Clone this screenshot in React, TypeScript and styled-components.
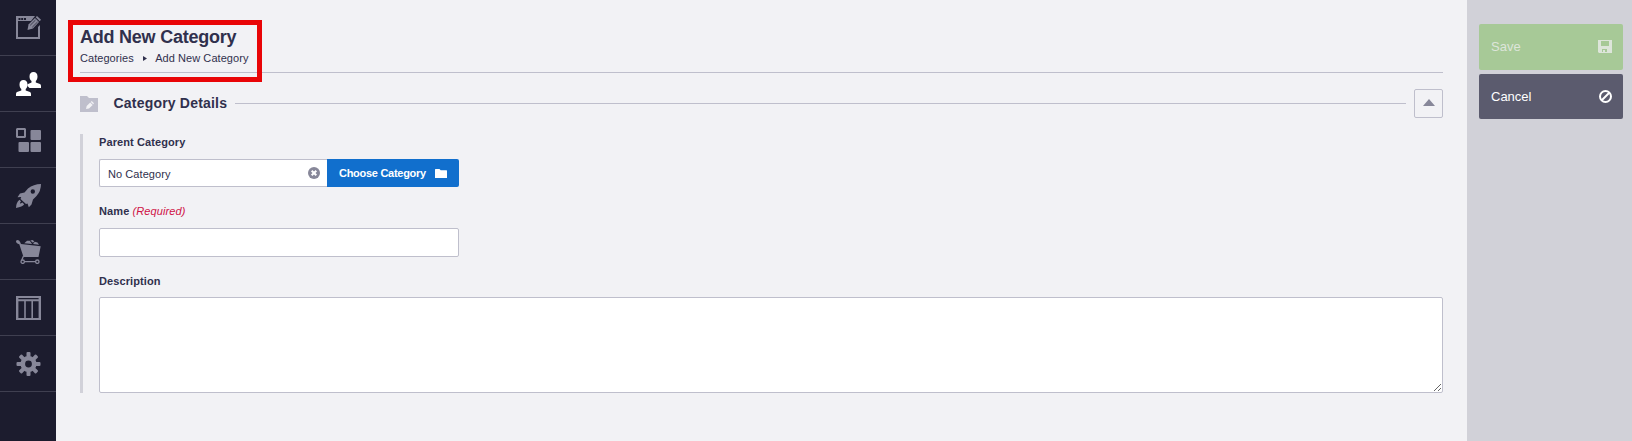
import React from 'react';
import styled, { createGlobalStyle } from 'styled-components';

const GlobalStyle = createGlobalStyle`
  * { box-sizing: border-box; }
  body { margin: 0; background: #f2f2f5; color: #30304d; font-family: "Liberation Sans", Arial, sans-serif; font-size: 11px; }
  svg { display: block; flex: none; }
  button, input, textarea { font-family: inherit; }
`;

const Page = styled.div`
  display: flex;
  height: 441px;
  overflow: hidden;
`;

const SideNav = styled.nav`
  width: 56px;
  flex: none;
  background: #1c1c2e;
`;

const NavItem = styled.a<{ $active?: boolean }>`
  display: flex;
  height: 56px;
  padding: 16px 0 0 16px;
  border-bottom: 1px solid #3f3f50;
  color: ${(p) => (p.$active ? '#ffffff' : '#878799')};
`;

const Main = styled.main`
  flex: 1;
  min-width: 0;
  padding: 27px 24px 0;
`;

const Header = styled.header`
  position: relative;
  height: 46px;
  border-bottom: 1px solid #bfbfcc;
`;

const Highlight = styled.div`
  position: absolute;
  left: -12px;
  top: -7px;
  width: 194px;
  height: 62px;
  border: 5px solid #e90507;
`;

const Title = styled.h1`
  margin: 0;
  font-size: 18px;
  line-height: 20px;
  letter-spacing: -0.23px;
`;

const Breadcrumb = styled.div`
  display: flex;
  align-items: center;
  margin-top: 4px;
  line-height: 14px;
`;

const Crumb = styled.span<{ $spacing: number }>`
  letter-spacing: ${(p) => p.$spacing}px;
`;

const CrumbArrow = styled.svg`
  margin: 0 8.5px 0 9px;
`;

const SectionBar = styled.div`
  display: flex;
  align-items: center;
  height: 29px;
  margin-top: 16px;
`;

const SectionTitle = styled.h2`
  margin: 0 0 1px 15.5px;
  width: 121.5px;
  font-size: 14px;
  line-height: 18px;
  letter-spacing: 0.2px;
  white-space: nowrap;
`;

const Rule = styled.div`
  flex: 1;
  height: 1px;
  margin-right: 8px;
  background: #bfbfcc;
`;

const Toggle = styled.button`
  display: flex;
  align-items: center;
  justify-content: center;
  width: 29px;
  height: 29px;
  padding: 0 0 2px;
  border: 1px solid #bfbfcc;
  border-radius: 2px;
  background: transparent;
  color: #878799;
`;

const Fields = styled.div`
  display: flex;
  flex-direction: column;
  height: 259px;
  margin-top: 16px;
  padding-left: 16px;
  border-left: 3px solid #d1d1d9;
`;

const Label = styled.label<{ $gap: number }>`
  display: block;
  margin-bottom: ${(p) => p.$gap}px;
  height: 16px;
  line-height: 16px;
  font-weight: bold;
  letter-spacing: 0.1px;
`;

const Required = styled.em`
  color: #cf1145;
  font-weight: normal;
  letter-spacing: 0.1px;
`;

const Picker = styled.div`
  display: flex;
  width: 360px;
  height: 28px;
  margin-bottom: 16px;
`;

const PickedValue = styled.div`
  display: flex;
  align-items: center;
  justify-content: space-between;
  flex: 1;
  padding: 0 7px 0 8px;
  border: 1px solid #bfbfcc;
  border-right: 0;
  border-radius: 2px 0 0 2px;
  background: #fff;
  line-height: 14px;
  letter-spacing: 0.07px;

  span { padding-top: 2px; }
`;

const ChooseButton = styled.button`
  display: flex;
  align-items: center;
  justify-content: space-between;
  width: 132px;
  padding: 0 12px;
  border: 0;
  border-radius: 0 2px 2px 0;
  background: #116fcd;
  color: #fff;
  font-size: 11px;
  font-weight: bold;
  letter-spacing: -0.28px;
  white-space: nowrap;
`;

const TextInput = styled.input`
  width: 360px;
  height: 29px;
  margin-bottom: 16px;
  border: 1px solid #bfbfcc;
  border-radius: 2px;
  background: #fff;
`;

const TextArea = styled.textarea`
  display: block;
  width: 100%;
  height: 96px;
  border: 1px solid #bfbfcc;
  border-radius: 2px;
  background: #fff;
  resize: both;
`;

const Actions = styled.aside`
  display: flex;
  flex-direction: column;
  gap: 4px;
  width: 165px;
  flex: none;
  padding: 24px 9px 0 12px;
  background: #d1d1d8;
`;

const ActionButton = styled.button<{ $kind: 'save' | 'cancel' }>`
  display: flex;
  align-items: center;
  justify-content: space-between;
  height: ${(p) => (p.$kind === 'save' ? 46 : 45)}px;
  padding: 0 11px 1px 12px;
  border: 0;
  border-radius: 2px;
  background: ${(p) => (p.$kind === 'save' ? '#a7c997' : '#5b5b6e')};
  color: ${(p) => (p.$kind === 'save' ? '#dde5da' : '#ffffff')};
  font-size: 13px;
`;

const ContentIcon = () => (
  <svg width="25" height="24" viewBox="0 0 25 24" fill="currentColor">
    <path d="M0 0H19L15 5H2V21H22V11L24 9V23H0ZM2.5 2V4H4.5V2ZM5.2 2V4H7.2V2ZM8 2V4H10V2Z" fillRule="evenodd" />
    <path d="M11.5 14L12.5 8.5L19 2L23 6L17 12.5Z" />
    <path d="M19.7 1.2L21 0L25 3.7L23.7 5.2Z" />
    <path d="M14.2 9.3L19.5 4M16.3 11.2L21.5 6" stroke="#1c1c2e" strokeWidth=".7" />
  </svg>
);

const UsersIcon = () => (
  <svg width="25" height="24" viewBox="0 0 25 24" fill="currentColor">
    <path d="M13.5 4.5C13.5 1.5 15 0 17.5 0S21.5 1.5 21.5 4.5C21.5 6.5 20.8 8 19.8 9V10.5L24 12Q25 12.6 25 14V16H13.5L11.5 14V12.2L15.5 10.5V9C14.3 8 13.5 6.5 13.5 4.5Z" />
    <path d="M3.5 12.5C3.5 9.5 5 8 7.5 8S11.5 9.5 11.5 12.5C11.5 14.5 10.8 16 9.7 17V18.5L14 20Q15 20.6 15 22V24H0V22Q0 20.6 1 20L5.3 18.5V17C4.2 16 3.5 14.5 3.5 12.5Z" />
  </svg>
);

const ModulesIcon = () => (
  <svg width="25" height="24" viewBox="0 0 25 24" fill="currentColor">
    <path d="M1 0H9L10 1V9L9 10H1L0 9V1ZM2 2V8H8V2Z" fillRule="evenodd" />
    <rect x="14.5" y="2" width="10.5" height="10" rx="1" />
    <rect x="2.5" y="14" width="10.5" height="10" rx="1" />
    <rect x="14.5" y="14" width="10.5" height="10" rx="1" />
  </svg>
);

const RocketIcon = () => (
  <svg width="25" height="24" viewBox="0 0 25 24" fill="currentColor">
    <path fillRule="evenodd" d="M25 0Q17.5 0 12 4.5L8.5 8.5L4 9.5L1.5 13.3L5.2 13L4.5 15L10 20L11.5 19.5L12.8 23.2L15.5 20.5L17 15.5L20.5 12Q25 7 25 0ZM16.8 5.3A2.2 2.2 0 1 1 16.8 9.7A2.2 2.2 0 1 1 16.8 5.3Z" />
    <path d="M3.5 15.8L5 17.2Q3.8 18.8 4 19.5Q5 19.6 6.3 18.5L8.2 20.3Q6.5 23 0 24Q0 18.5 3.5 15.8Z" />
  </svg>
);

const CartIcon = () => (
  <svg width="25" height="24" viewBox="0 0 25 24" fill="currentColor">
    <path d="M1.3 0Q3.5 0 4.2 2.3L5 4L24.7 6.2L22.5 17H7.5L3.3 4.2Q0 3.5 0 1.3Q0 .2 1.3 0Z" />
    <path d="M8.3 3.2L11 .8H13.8L16 4Z" />
    <path d="M14.3 .5L16.5 0L18.3 1.2L17 2.8Z" />
    <path d="M17 4.1L18.8 1.8L21.5 2.5L23 4.8Z" />
    <path d="M7.5 16L5.8 20M8.5 21.7H19.5" fill="none" stroke="currentColor" strokeWidth="1.3" />
    <circle cx="6.7" cy="21.7" r="1.7" fill="none" stroke="currentColor" strokeWidth="1.3" />
    <circle cx="21.3" cy="21.7" r="1.7" fill="none" stroke="currentColor" strokeWidth="1.3" />
  </svg>
);

const ColumnsIcon = () => (
  <svg width="25" height="24" viewBox="0 0 25 24" fill="currentColor">
    <path d="M0 0H25V24H0ZM2.4 2V3.3H22.6V2ZM2.4 5.2V22H8.2V5.2ZM9.8 5.2V22H15.4V5.2ZM17 5.2V22H22.6V5.2Z" fillRule="evenodd" />
  </svg>
);

const GearIcon = () => (
  <svg width="25" height="24" viewBox="-12.5 -12 25 24" fill="currentColor">
    {[0, 45, 90, 135, 180, 225, 270, 315].map((angle) => (
      <rect key={angle} x="-2" y="-12" width="4" height="6" rx="1" transform={`rotate(${angle})`} />
    ))}
    <path d="M0-8A8 8 0 1 1 0 8A8 8 0 1 1 0-8ZM0-3.4A3.4 3.4 0 1 0 0 3.4A3.4 3.4 0 1 0 0-3.4Z" fillRule="evenodd" />
  </svg>
);

const EditFolderIcon = () => (
  <svg width="18" height="16" viewBox="0 0 18 16">
    <path d="M0 0H7L9 2H18V16H0Z" fill="#bfbfcc" />
    <path d="M6 13L6.7 10L10.2 6.5L12.7 8.9L9 12.6ZM10.8 5.9L11.7 5L14 7.3L13.2 8.3Z" fill="#f2f2f5" />
  </svg>
);

const ClearIcon = () => (
  <svg width="12" height="12" viewBox="0 0 12 12">
    <circle cx="6" cy="6" r="6" fill="#878799" />
    <path d="M3.7 3.7L8.3 8.3M8.3 3.7L3.7 8.3" stroke="#fff" strokeWidth="2" />
  </svg>
);

const FolderIcon = () => (
  <svg width="12" height="9" viewBox="0 0 12 9" fill="currentColor">
    <path d="M.5 0H4.5L5.7 1.3H11.5Q12 1.3 12 2V9H0V.5Z" />
  </svg>
);

const SaveIcon = () => (
  <svg width="14" height="13" viewBox="0 0 14 13" fill="currentColor">
    <path fillRule="evenodd" d="M0 0H14V13H1L0 12ZM3 1V6H11V1ZM4 9V12H9V9ZM5 10H7V12H5Z" />
  </svg>
);

const CancelIcon = () => (
  <svg width="13" height="13" viewBox="0 0 13 13" fill="none" stroke="currentColor" strokeWidth="2">
    <circle cx="6.5" cy="6.5" r="5.5" />
    <path d="M3 10L10 3" />
  </svg>
);

const navItems = [
  { name: 'content', Icon: ContentIcon },
  { name: 'users', Icon: UsersIcon, active: true },
  { name: 'modules', Icon: ModulesIcon },
  { name: 'launch', Icon: RocketIcon },
  { name: 'shop', Icon: CartIcon },
  { name: 'layout', Icon: ColumnsIcon },
  { name: 'settings', Icon: GearIcon },
];

export default function App() {
  return (
    <Page>
      <GlobalStyle />
      <SideNav>
        {navItems.map(({ name, Icon, active }) => (
          <NavItem key={name} $active={active}><Icon /></NavItem>
        ))}
      </SideNav>
      <Main>
        <Header>
          <Title>Add New Category</Title>
          <Breadcrumb>
            <Crumb $spacing={0.05}>Categories</Crumb>
            <CrumbArrow width="4" height="5" viewBox="0 0 4 5"><path d="M0 0L4 2.5L0 5Z" fill="#30304d" /></CrumbArrow>
            <Crumb $spacing={0.06}>Add New Category</Crumb>
          </Breadcrumb>
          <Highlight />
        </Header>
        <SectionBar>
          <EditFolderIcon />
          <SectionTitle>Category Details</SectionTitle>
          <Rule />
          <Toggle>
            <svg width="12" height="7" viewBox="0 0 12 7"><path d="M6 0L12 7H0Z" fill="currentColor" /></svg>
          </Toggle>
        </SectionBar>
        <Fields>
          <Label $gap={9}>Parent Category</Label>
          <Picker>
            <PickedValue><span>No Category</span><ClearIcon /></PickedValue>
            <ChooseButton>Choose Category<FolderIcon /></ChooseButton>
          </Picker>
          <Label $gap={9} htmlFor="name">Name <Required>(Required)</Required></Label>
          <TextInput id="name" />
          <Label $gap={8} htmlFor="description">Description</Label>
          <TextArea id="description" />
        </Fields>
      </Main>
      <Actions>
        <ActionButton $kind="save">Save<SaveIcon /></ActionButton>
        <ActionButton $kind="cancel">Cancel<CancelIcon /></ActionButton>
      </Actions>
    </Page>
  );
}
